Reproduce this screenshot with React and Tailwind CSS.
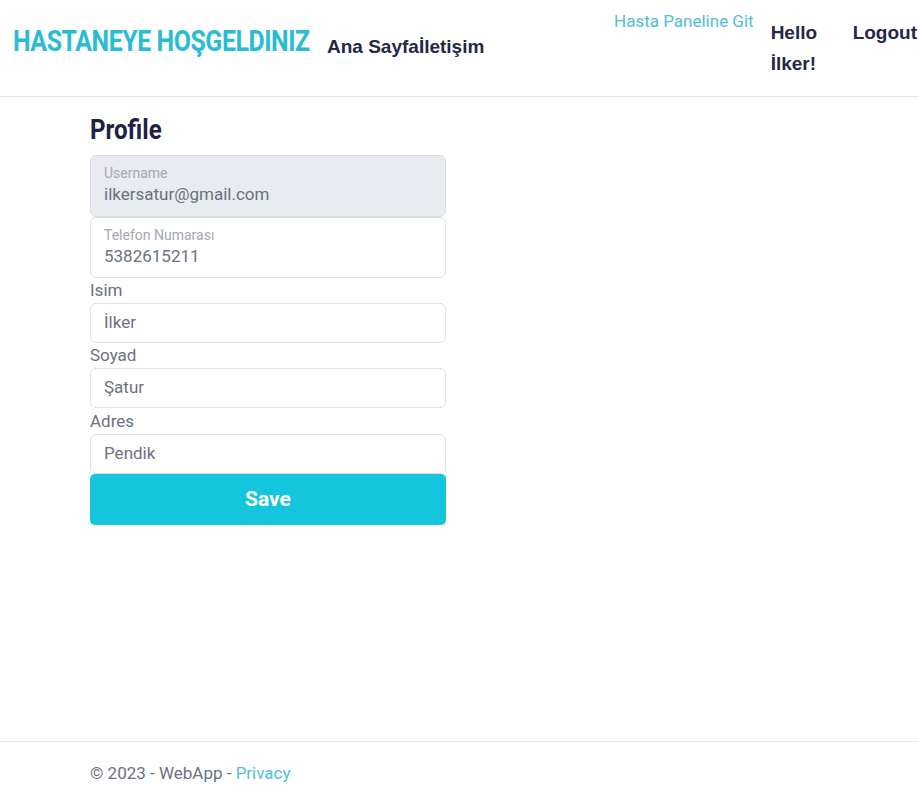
export default function App() {
  return (
    <div className="min-h-[805px] flex flex-col bg-white" style={{ fontFamily: 'Roboto, "Liberation Sans", sans-serif' }}>
      <header className="h-[97px] border-b border-[#e5e7eb] shadow-[0_1px_3px_rgba(0,0,0,0.04)] flex items-start overflow-hidden">
        <h1 className="ml-[13px] mt-[26px] text-[30px] leading-[30px] font-bold text-[#29bcd4] tracking-[-0.5px] scale-x-[0.829] origin-left w-[296px] shrink-0 whitespace-nowrap">
          HASTANEYE HOŞGELDINIZ
        </h1>
        <nav className="ml-[18px] mt-[33px] flex text-[19px] font-bold text-[#232845] whitespace-nowrap" style={{ fontFamily: '"Liberation Sans", Arial, sans-serif' }}>
          <a href="#">Ana Sayfa</a>
          <a href="#">İletişim</a>
        </nav>
        <a href="#" className="ml-auto mt-[9px] text-[17px] leading-[25px] text-[#4fbfd6] whitespace-nowrap">Hasta Paneline Git</a>
        <div className="ml-[17px] mt-[17px] w-[52px] shrink-0 text-[19px] leading-[31px] font-bold text-[#232845]" style={{ fontFamily: '"Liberation Sans", Arial, sans-serif' }}>
          Hello İlker!
        </div>
        <a href="#" className="ml-[30px] mt-[17px] mr-[1px] text-[19px] leading-[31px] font-bold text-[#232845] whitespace-nowrap" style={{ fontFamily: '"Liberation Sans", Arial, sans-serif' }}>
          Logout
        </a>
      </header>

      <main className="flex-1 pl-[90px] pt-[15px]">
        <div className="w-[356px]">
          <h2 className="text-[28px] leading-[36px] font-bold text-[#1e2340] scale-x-[0.86] origin-left">Profile</h2>
          <div className="mt-[7px] flex flex-col">
            <div className="h-[62px] rounded-[6px] border border-[#d9dde3] bg-[#e8ebef] px-[13px] pt-[9px]">
              <div className="text-[14px] leading-[17px] text-[#a3a9b2]">Username</div>
              <div className="text-[17px] leading-[25px] text-[#6b7280]">ilkersatur@gmail.com</div>
            </div>
            <div className="h-[61px] rounded-[6px] border border-[#dde0e5] bg-white px-[13px] pt-[9px]">
              <div className="text-[14px] leading-[17px] text-[#a3a9b2]">Telefon Numarası</div>
              <div className="text-[17px] leading-[25px] text-[#6b7280]">5382615211</div>
            </div>
            <label className="text-[17px] leading-[25px] text-[#6b7280]">Isim</label>
            <div className="h-[40px] rounded-[6px] border border-[#dde0e5] px-[13px] flex items-center text-[17px] text-[#6b7280]">İlker</div>
            <label className="text-[17px] leading-[25px] text-[#6b7280]">Soyad</label>
            <div className="h-[40px] rounded-[6px] border border-[#dde0e5] px-[13px] flex items-center text-[17px] text-[#6b7280]">Şatur</div>
            <label className="text-[17px] leading-[26px] text-[#6b7280]">Adres</label>
            <div className="h-[40px] rounded-[6px] border border-[#dde0e5] px-[13px] flex items-center text-[17px] text-[#6b7280]">Pendik</div>
            <button className="h-[51px] rounded-[5px] bg-[#13c5dd] text-white text-[21px] font-bold">Save</button>
          </div>
        </div>
      </main>

      <footer className="h-[64px] border-t border-[#e5e7eb] pl-[90px] pt-[19px] text-[17px] text-[#6b7280]">
        © 2023 - WebApp - <a href="#" className="text-[#4fbfd6]">Privacy</a>
      </footer>
    </div>
  );
}
